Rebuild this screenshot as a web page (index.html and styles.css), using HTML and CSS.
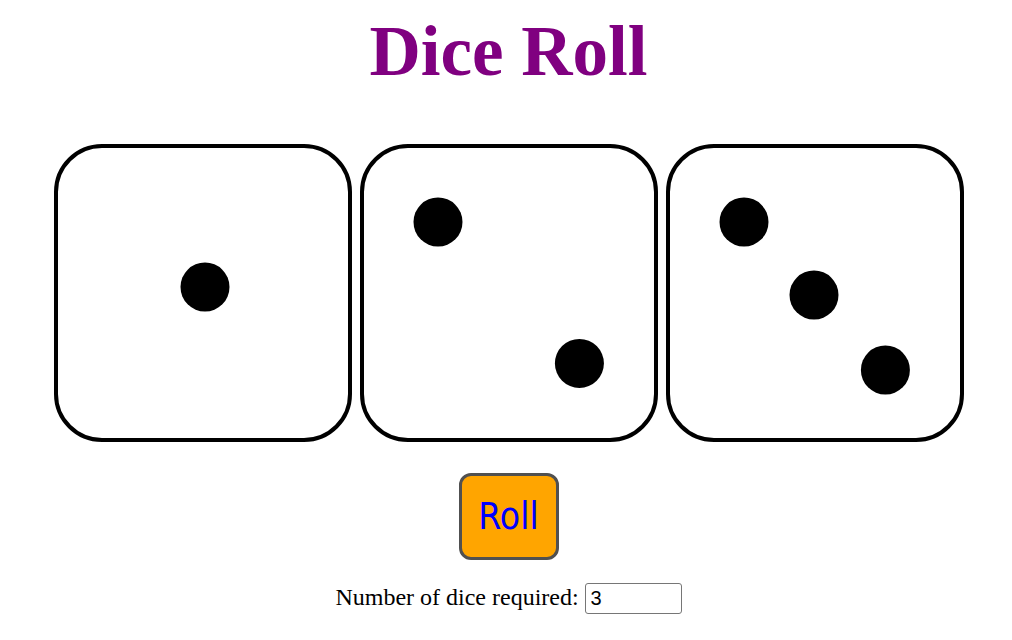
FILE: index.html
```html
<!DOCTYPE html>
<html>
<head>
<meta charset="utf-8">
<title>Dice Roll</title>
<link rel="stylesheet" href="styles.css">
</head>
<body>
<div class="page">
  <h1 class="title">Dice Roll</h1>
  <div class="dice">
    <div class="die">
      <svg class="face" viewBox="0 0 290 290" width="290" height="290"><circle cx="147" cy="139" r="24.5"/></svg>
    </div>
    <div class="die">
      <svg class="face" viewBox="0 0 290 290" width="290" height="290"><circle cx="74" cy="74" r="24.5"/><circle cx="215.4" cy="215.4" r="24.5"/></svg>
    </div>
    <div class="die">
      <svg class="face" viewBox="0 0 290 290" width="290" height="290"><circle cx="74" cy="74" r="24.5"/><circle cx="144" cy="147" r="24.5"/><circle cx="215.4" cy="222" r="24.5"/></svg>
    </div>
  </div>
  <div class="controls">
    <button class="roll" type="button">Roll</button>
  </div>
  <p class="count"><label>Number of dice required: <input class="count-input" type="text" value="3"></label></p>
</div>
</body>
</html>
```
FILE: styles.css
```css
html, body {
  margin: 0;
  padding: 0;
  background: #ffffff;
}

body {
  font-family: "Liberation Serif", "Times New Roman", serif;
  color: #000000;
}

.page {
  padding-left: 5px;
  display: flex;
  flex-direction: column;
  align-items: center;
}

.title {
  margin: 16px 0 0;
  font-family: "Liberation Serif", "Times New Roman", serif;
  font-weight: bold;
  font-size: 71px;
  line-height: 71px;
  color: #800080;
}

.dice {
  margin-top: 57px;
  display: flex;
  gap: 8px;
}

.die {
  box-sizing: border-box;
  width: 298px;
  height: 298px;
  border: 4px solid #000000;
  border-radius: 48px;
  background: #ffffff;
}

.face {
  display: block;
  fill: #000000;
}

.controls {
  margin-top: 31px;
  display: flex;
  justify-content: center;
}

.roll {
  box-sizing: border-box;
  width: 100px;
  height: 87px;
  padding: 0;
  background: #ffa500;
  border: 3px solid #505050;
  border-radius: 12px;
  color: #0000ff;
  font-family: "DejaVu Sans Condensed", "DejaVu Sans", sans-serif;
  font-stretch: condensed;
  font-size: 37px;
}

.count {
  margin: 23px 0 0;
  font-size: 24px;
}

.count-input {
  box-sizing: border-box;
  width: 97px;
  height: 31px;
  padding: 1px 5px;
  border: 1px solid #767676;
  border-radius: 3px;
  font-family: "Liberation Sans", Arial, sans-serif;
  font-size: 20px;
  color: #000000;
  vertical-align: baseline;
}
```
